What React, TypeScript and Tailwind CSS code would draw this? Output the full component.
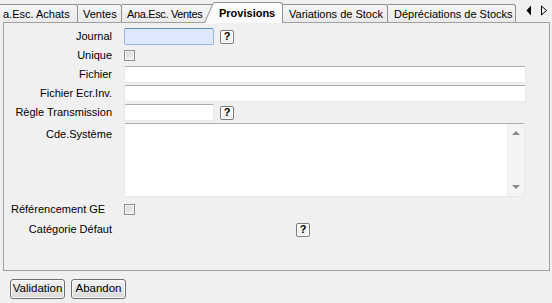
const font = "font-['Liberation_Sans',Arial,sans-serif]"

function Tab({ label, className }: { label: string; className: string }) {
  return (
    <div
      className={`shrink-0 h-[18px] pt-px border-t border-r border-[#919191] rounded-tr-[3px] bg-gradient-to-b from-[#f6f6f6] to-[#e9e9e9] flex items-center whitespace-nowrap ${className}`}
    >
      {label}
    </div>
  )
}

function HelpButton() {
  return (
    <div className="w-[14px] h-[14px] border border-[#7c7c7c] rounded-[2px] bg-gradient-to-b from-white to-[#ececec] shadow-[inset_0_0_0_1px_#ffffff] flex items-center justify-center text-[11px] font-bold leading-none">
      ?
    </div>
  )
}

function CheckBox() {
  return (
    <div className="w-[11px] h-[11px] border border-[#8e8f8f] bg-gradient-to-br from-[#d4d4d4] to-[#f7f7f7] shadow-[inset_0_0_0_1px_#f4f4f4]" />
  )
}

function TextBox({ width, focus }: { width?: string; focus?: boolean }) {
  return (
    <div
      className={`h-[17px] rounded-[2px] border ${
        focus
          ? 'bg-[#dde7fd] border-[#98b9e2] border-t-[#5b8ac4]'
          : 'bg-white border-[#e3e9ef] border-t-[#abadb3]'
      } ${width ?? 'w-full'}`}
    />
  )
}

function Row({
  label,
  children,
  className = '',
  labelClass = 'text-right',
}: {
  label: string
  children: React.ReactNode
  className?: string
  labelClass?: string
}) {
  return (
    <div className={`grid grid-cols-[108px_1fr] gap-x-[12px] items-center h-[17px] ${className}`}>
      <div className={`whitespace-nowrap ${labelClass}`}>{label}</div>
      <div className="flex items-center">{children}</div>
    </div>
  )
}

export default function App() {
  return (
    <div className={`w-[552px] h-[303px] bg-[#f0f0f0] text-[11px] text-black overflow-hidden ${font}`}>
      {/* tab strip */}
      <div className="relative h-[22px] flex items-end">
        <Tab label="a.Esc. Achats" className="w-[78px] pl-[3px]" />
        <Tab label="Ventes" className="w-[44px] pl-[5px]" />
        <Tab label="Ana.Esc. Ventes" className="w-[92px] pl-[5px] tracking-[-0.35px]" />
        <div className="shrink-0 relative z-10 -mb-px h-[21px] w-[69px] pl-[5px] pt-px border-t border-r border-[#919191] rounded-tr-[3px] bg-[#fbfbfb] flex items-center font-bold whitespace-nowrap">
          <svg
            className="absolute left-[-10px] top-[-1px]"
            width="11"
            height="22"
            viewBox="0 0 11 22"
          >
            <polygon points="0,22 9,1.5 11,0.5 11,22" fill="#fbfbfb" />
            <polyline points="0.5,21 9,1.5 11,0.5" fill="none" stroke="#919191" strokeWidth="1" />
          </svg>
          Provisions
        </div>
        <Tab label="Variations de Stock" className="w-[105px] pl-[6px]" />
        <Tab label="Dépréciations de Stocks" className="w-[128px] pl-[6px]" />
        <div className="flex-1 min-w-0 h-[22px] flex items-center pl-[10px] pb-[1px]">
          <svg width="22" height="11" viewBox="0 0 22 11">
            <polygon points="5,0.5 5,10.5 0.5,5.5" fill="#000" />
            <polygon points="15.5,1 15.5,10 20.5,5.5" fill="none" stroke="#000" strokeWidth="1" />
          </svg>
        </div>
      </div>

      {/* panel */}
      <div className="pl-[3px]">
        <div className="w-[547px] h-[249px] border border-[#a0a0a0] bg-[#f0f0f0] pt-[5px] pr-[23px]">
          <Row label="Journal">
            <TextBox width="w-[90px]" focus />
            <div className="ml-[6px]">
              <HelpButton />
            </div>
          </Row>
          <Row label="Unique" className="mt-[2px]">
            <CheckBox />
          </Row>
          <Row label="Fichier" className="mt-[2px]">
            <TextBox />
          </Row>
          <Row label="Fichier Ecr.Inv." className="mt-[2px]">
            <TextBox />
          </Row>
          <Row label="Règle Transmission" className="mt-[2px]">
            <TextBox width="w-[90px]" />
            <div className="ml-[6px]">
              <HelpButton />
            </div>
          </Row>
          <div className="grid grid-cols-[108px_1fr] gap-x-[12px] mt-[2px] h-[74px]">
            <div className="text-right pt-[3px]">Cde.Système</div>
            <div className="h-[74px] pr-px">
              <div className="h-full bg-white border border-[#e3e9ef] border-t-[#abadb3] rounded-[2px] flex justify-end">
                <div className="w-[17px] h-full bg-[#f4f4f4] border-l border-[#ececec] flex flex-col items-center justify-between py-[7px]">
                  <svg width="8" height="4" viewBox="0 0 8 4">
                    <polygon points="0,4 8,4 4,0" fill="#8a8a8a" />
                  </svg>
                  <svg width="8" height="4" viewBox="0 0 8 4">
                    <polygon points="0,0 8,0 4,4" fill="#8a8a8a" />
                  </svg>
                </div>
              </div>
            </div>
          </div>
          <Row label="Référencement GE" className="mt-[4px]" labelClass="text-left pl-[7px]">
            <CheckBox />
          </Row>
          <Row label="Catégorie Défaut" className="mt-[3px]">
            <div className="ml-[172px]">
              <HelpButton />
            </div>
          </Row>
        </div>
      </div>

      {/* buttons */}
      <div className="flex gap-[6px] pl-[10px] mt-[8px]">
        {['Validation', 'Abandon'].map((b) => (
          <button
            key={b}
            className="w-[55px] h-[20px] border border-[#707070] rounded-[3px] bg-gradient-to-b from-[#f3f3f3] to-[#dadada] shadow-[inset_0_0_0_1px_#fbfbfb] text-[11.5px] leading-none"
          >
            {b}
          </button>
        ))}
      </div>
    </div>
  )
}
